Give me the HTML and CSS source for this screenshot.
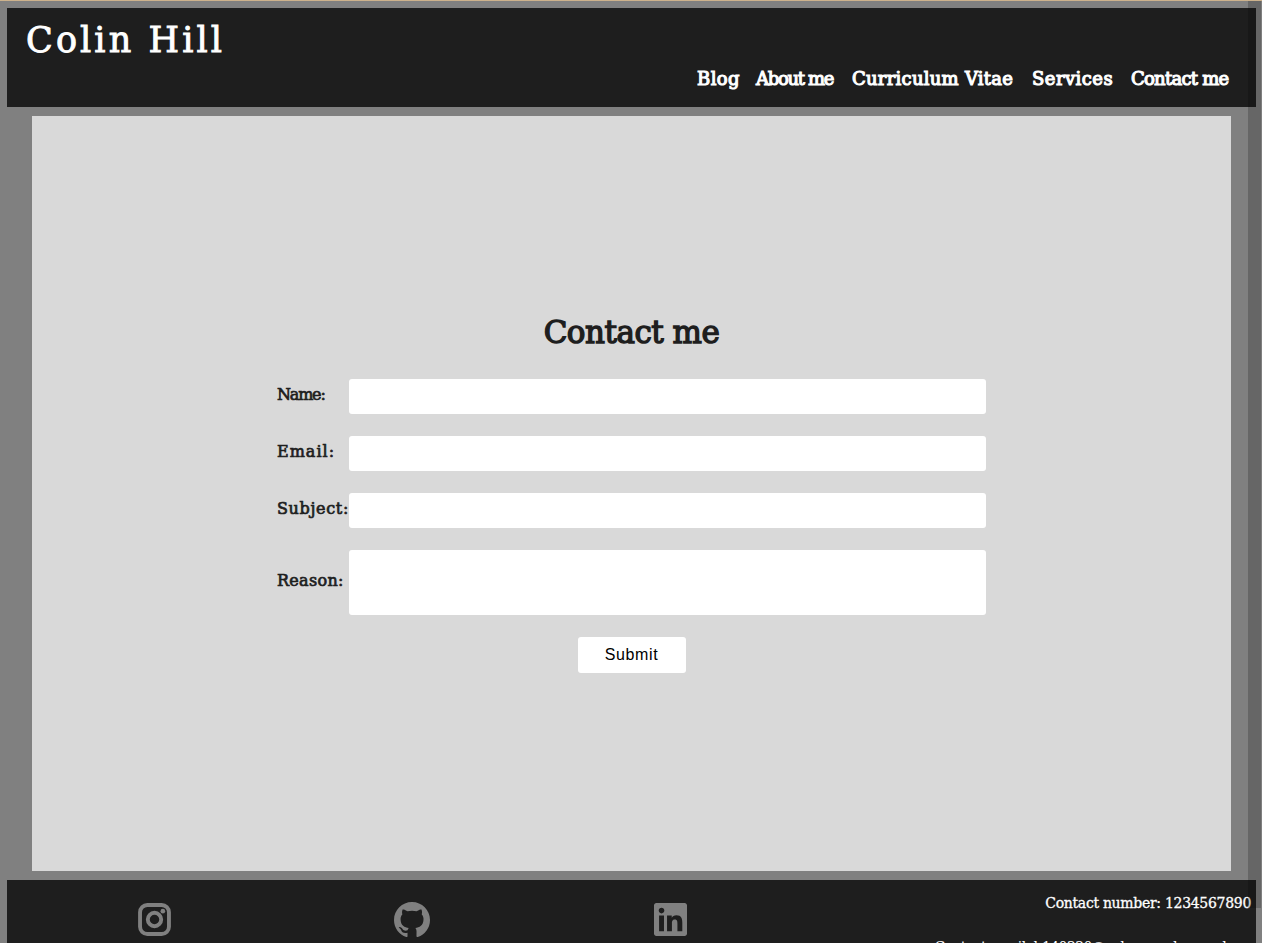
FILE: index.html
```html
<!DOCTYPE html>
<html lang="en">
<head>
<meta charset="utf-8">
<title>Colin Hill</title>
<link rel="stylesheet" href="styles.css">
</head>
<body>
<header class="header">
  <div class="brand">Colin Hill</div>
  <nav class="nav">
    <a class="blog">Blog</a>
    <a class="about">About me</a>
    <a class="cv">Curriculum Vitae</a>
    <a class="services">Services</a>
    <a class="contact">Contact me</a>
  </nav>
</header>
<main class="main">
  <h1 class="title">Contact me</h1>
  <form class="form">
    <label class="name" for="name">Name:</label><input class="field" id="name">
    <label class="email" for="email">Email:</label><input class="field" id="email">
    <label class="subject" for="subject">Subject:</label><input class="field" id="subject">
    <label class="reason" for="reason">Reason:</label><textarea class="field area" id="reason"></textarea>
    <button class="submit" type="button">Submit</button>
  </form>
</main>
<footer class="footer">
  <div class="social">
    <svg class="insta" viewBox="0 0 34 34"><rect x="2.1" y="2.1" width="29.8" height="29.8" rx="7.5" fill="none" stroke="currentColor" stroke-width="4"/><circle cx="17" cy="17" r="6.9" fill="none" stroke="currentColor" stroke-width="4"/><circle cx="25.6" cy="8.4" r="2.4" fill="currentColor"/></svg>
  </div>
  <div class="social">
    <svg class="github" viewBox="0 0 16 16"><path fill="currentColor" d="M8 0C3.58 0 0 3.58 0 8c0 3.54 2.29 6.53 5.47 7.59.4.07.55-.17.55-.38 0-.19-.01-.82-.01-1.49-2.01.37-2.53-.49-2.69-.94-.09-.23-.48-.94-.82-1.13-.28-.15-.68-.52-.01-.53.63-.01 1.08.58 1.23.82.72 1.21 1.87.87 2.33.66.07-.52.28-.87.51-1.07-1.78-.2-3.64-.89-3.64-3.95 0-.87.31-1.59.82-2.15-.08-.2-.36-1.02.08-2.12 0 0 .67-.21 2.2.82.64-.18 1.32-.27 2-.27s1.36.09 2 .27c1.53-1.04 2.2-.82 2.2-.82.44 1.1.16 1.92.08 2.12.51.56.82 1.27.82 2.15 0 3.07-1.87 3.75-3.65 3.95.29.25.54.73.54 1.48 0 1.07-.01 1.93-.01 2.2 0 .21.15.46.55.38A8.01 8.01 0 0 0 16 8c0-4.42-3.58-8-8-8z"/></svg>
  </div>
  <div class="social">
    <svg class="linkedin" viewBox="0 0 448 448"><path fill="currentColor" d="M416 0H31.900C14.300 0 0 14.500 0 32.300v383.400C0 433.500 14.300 448 31.900 448H416c17.600 0 32-14.500 32-32.300V32.300C448 14.500 433.600 0 416 0zM135.400 384H69V170.200h66.500V384zm-33.200-243c-21.300 0-38.500-17.300-38.500-38.500S80.900 64 102.200 64c21.200 0 38.500 17.300 38.500 38.500 0 21.300-17.200 38.500-38.500 38.500zm282.100 243h-66.400V280c0-24.800-.5-56.700-34.500-56.700-34.600 0-39.900 27-39.900 54.900V384h-66.400V170.200h63.700v29.200h.9c8.900-16.800 30.600-34.500 62.900-34.500 67.200 0 79.700 44.300 79.700 101.900V384z"/></svg>
  </div>
  <div class="details">
    <p class="number">Contact number: 1234567890</p>
    <p class="mail">Contact email: h140220@cahoenserhamersham</p>
  </div>
</footer>
<div class="scrollbar"></div>
</body>
</html>
```
FILE: styles.css
```css
* { box-sizing: border-box; }
body {
  margin: 0;
  width: 1262px;
  height: 943px;
  overflow: hidden;
  padding: 7px 6px 0 7px;
  border-top: 1px solid #cdb28c;
  background: #808080;
  font-family: "DejaVu Serif", serif;
  color: #1e1e1e;
  position: relative;
}
.header {
  height: 99px;
  background: #1e1e1e;
  color: #fff;
  padding: 11px 26px 0 19px;
}
.brand {
  font-size: 35px;
  line-height: 42px;
  letter-spacing: 3.1px;
  -webkit-text-stroke: 0.9px #fff;
}
.nav {
  display: flex;
  justify-content: flex-end;
  height: 34px;
  align-items: center;
  font-size: 18px;
  white-space: nowrap;
  -webkit-text-stroke: 1.1px #fff;
}
.nav a { margin-left: 17px; }
.blog { width: 42px; letter-spacing: 0.4px; }
.about { width: 79px; letter-spacing: -1.3px; }
.cv { width: 163px; letter-spacing: 0.25px; }
.services { width: 82px; letter-spacing: 0.45px; }
.contact { width: 99px; letter-spacing: -0.75px; }
.main {
  width: 1199px;
  height: 755px;
  margin: 9px 0 9px 25px;
  padding-top: 194px;
  background: #d9d9d9;
}
.title {
  margin: 0 0 25px;
  text-align: center;
  font-size: 31px;
  font-weight: 400;
  line-height: 44px;
  letter-spacing: -0.5px;
  -webkit-text-stroke: 1.4px #1e1e1e;
}
.form {
  display: grid;
  grid-template-columns: 72px 637px;
  row-gap: 22px;
  width: 709px;
  margin-left: 245px;
}
.form label {
  align-self: center;
  padding-bottom: 3px;
  font-size: 16px;
  line-height: 22px;
  white-space: nowrap;
  -webkit-text-stroke: 0.7px #1e1e1e;
}
.name { letter-spacing: -1.2px; }
.email { letter-spacing: 1px; }
.subject { letter-spacing: 0.65px; }
.reason { letter-spacing: 0.3px; }
.field {
  display: block;
  width: 637px;
  height: 35px;
  border: 0;
  border-radius: 3px;
  background: #fff;
}
.area { height: 65px; resize: none; }
.submit {
  grid-column: 1 / 3;
  justify-self: center;
  width: 108px;
  height: 36px;
  border: 0;
  border-radius: 3px;
  background: #fff;
  color: #000;
  font: 16px "Liberation Sans", Arial, sans-serif;
  letter-spacing: 0.6px;
}
.footer {
  display: grid;
  grid-template-columns: 258px 258px 258px 1fr;
  height: 63px;
  padding-left: 18px;
  background: #1e1e1e;
}
.social {
  display: flex;
  justify-content: center;
  padding-top: 22px;
  color: #808080;
}
.insta, .linkedin { width: 33px; height: 33px; margin-top: 1px; }
.github { width: 36px; height: 36px; }
.details {
  display: flex;
  flex-direction: column;
  align-items: flex-end;
  gap: 24px;
  padding: 13px 5px 0 0;
  overflow: hidden;
  color: #fff;
  font-size: 14px;
  line-height: 20px;
  white-space: nowrap;
}
.details p { margin: 0; }
.number { letter-spacing: -0.3px; -webkit-text-stroke: 0.3px #fff; }
.mail { letter-spacing: -0.6px; }
.scrollbar {
  position: absolute;
  top: 0;
  right: 1px;
  width: 13px;
  height: 907px;
  background: rgba(0, 0, 0, 0.2);
}
```
